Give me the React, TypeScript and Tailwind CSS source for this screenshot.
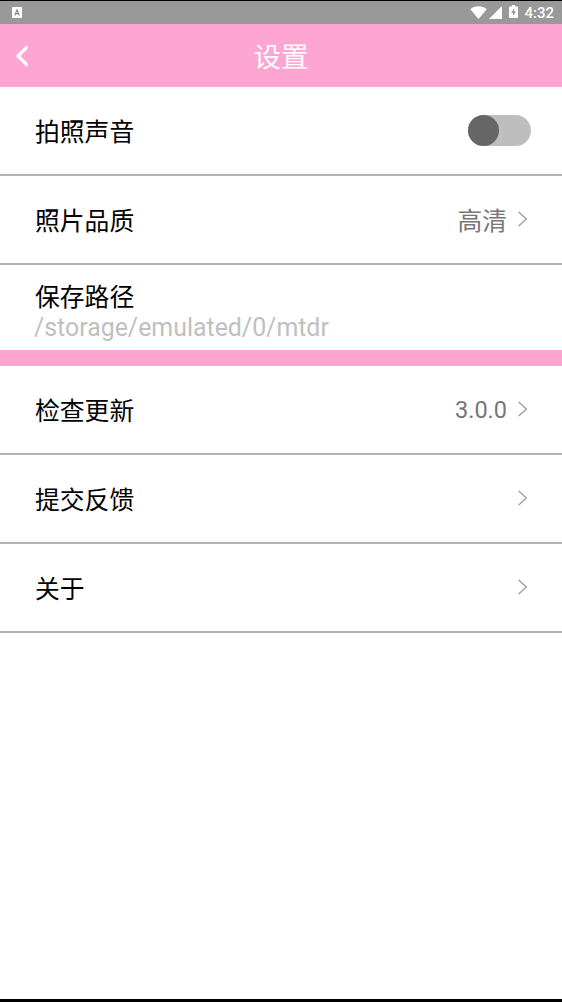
import type { ReactNode } from 'react';

function StatusBar() {
  return (
    <div className="flex h-6 shrink-0 items-center justify-between border-t border-black bg-[#999999] pr-[8px] pl-[12px] text-white">
      <svg width="10" height="11" viewBox="0 0 10 11" aria-hidden="true">
        <rect width="10" height="11" rx="1" fill="#fff" />
        <path d="M2.7 8.500 5 2.700 7.3 8.500M3.500 6.600h3" fill="none" stroke="#888" strokeWidth="1.1" />
      </svg>
      <div className="flex items-center">
        <svg width="17" height="13" viewBox="0 0 17 13" aria-hidden="true">
          <path d="M0.3 3.2C4.8-.6 12.2-.6 16.7 3.2L8.5 13Z" fill="#fff" />
        </svg>
        <svg className="ml-[2px]" width="13" height="13" viewBox="0 0 13 13" aria-hidden="true">
          <path d="M13 0V13H0Z" fill="#fff" />
        </svg>
        <svg className="mb-[2px] ml-[7px]" width="9" height="13" viewBox="0 0 9 14" preserveAspectRatio="none" aria-hidden="true">
          <path d="M2.8 0h3.4v1.5h1.8a1 1 0 0 1 1 1V13a1 1 0 0 1-1 1H1a1 1 0 0 1-1-1V2.500a1 1 0 0 1 1-1h1.800Z" fill="#fff" />
          <path d="M5.300 3.500 2 8.400h2v3.100L7.200 6.900H5.300Z" fill="#999" />
        </svg>
        <span className="ml-[6px] text-[15px] leading-[22px] font-medium">4:32</span>
      </div>
    </div>
  );
}

function Chevron() {
  return (
    <svg className="mb-px ml-[10px]" width="11" height="16" viewBox="0 0 11 16" aria-hidden="true">
      <path d="M1.700 1 9.400 8 1.700 15" fill="none" stroke="#999" strokeWidth="1.200" />
    </svg>
  );
}

function Row({ label, children }: { label: string; children?: ReactNode }) {
  return (
    <div className="flex h-[89px] shrink-0 items-center justify-between border-b-2 border-[#b3b3b3] pr-[34px] pl-[35px]">
      <span className="pt-[5px]">{label}</span>
      <div className="flex items-center text-[#777777]">{children}</div>
    </div>
  );
}

export default function App() {
  return (
    <div className="flex h-[1002px] w-[562px] flex-col overflow-hidden border-b-[3px] border-black bg-white font-[Roboto,'Noto_Sans_CJK_SC',sans-serif] text-[24.800px] leading-[36px] text-black">
      <StatusBar />
      <header className="grid h-[63px] shrink-0 grid-cols-[40px_1fr_40px] items-center bg-[#ffa5d2]">
        <button aria-label="返回" className="pl-[15px]">
          <svg width="14" height="22" viewBox="0 0 14 22">
            <path d="M11.500 2.500 3 11l8.500 8.500" fill="none" stroke="#fff" strokeWidth="3.200" strokeLinecap="round" />
          </svg>
        </button>
        <h1 className="pt-[4px] text-center text-[27.500px] text-white">设置</h1>
      </header>
      <Row label="拍照声音">
        <button role="switch" aria-checked="false" aria-label="拍照声音" className="-mr-[3px] h-[31px] w-[63px] rounded-full bg-[#bebebe]">
          <span className="block size-[31px] rounded-full bg-[#666666]" />
        </button>
      </Row>
      <Row label="照片品质">
        <span className="-mb-px pt-[4px]">高清</span>
        <Chevron />
      </Row>
      <div className="flex h-[85px] shrink-0 flex-col pt-[16px] pl-[35px]">
        <span className="leading-[34px]">保存路径</span>
        <span className="-ml-px text-[24.900px] leading-[26px] text-[#c0c0c0]">/storage/emulated/0/mtdr</span>
      </div>
      <div className="h-4 shrink-0 bg-[#ffa5d2]" />
      <Row label="检查更新">
        <span className="text-[23.500px]">3.0.0</span>
        <Chevron />
      </Row>
      <Row label="提交反馈">
        <Chevron />
      </Row>
      <Row label="关于">
        <Chevron />
      </Row>
    </div>
  );
}
